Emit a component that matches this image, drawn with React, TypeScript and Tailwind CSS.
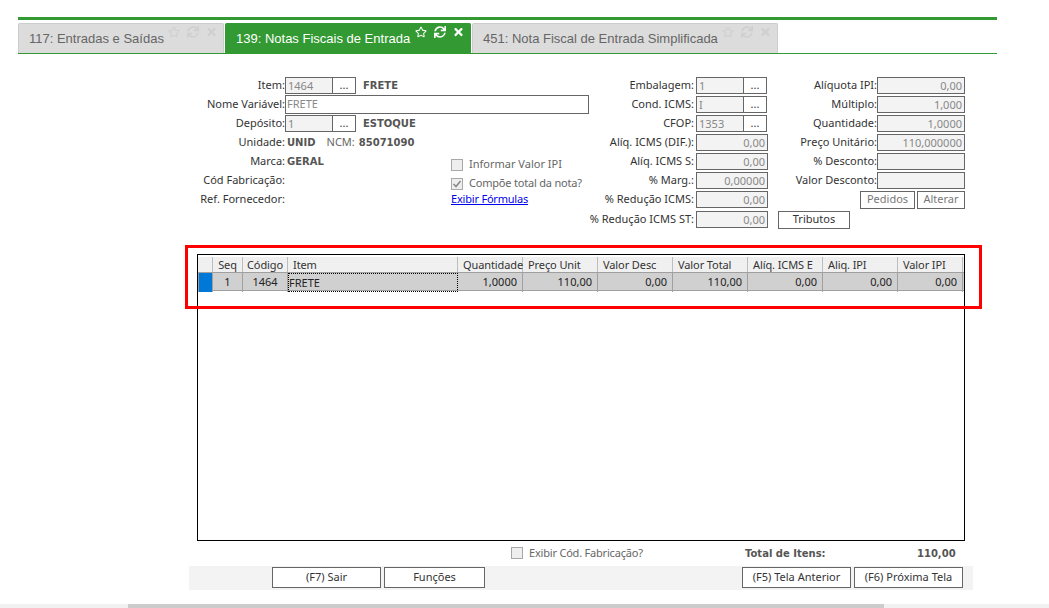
import React from "react";
import { FaRegStar, FaSync, FaTimes } from "react-icons/fa";

const font = { fontFamily: '"Noto Sans", "DejaVu Sans", sans-serif' };

function Tab({ label, active, w }: { label: string; active?: boolean; w: string }) {
  return (
    <div
      className={`${w} h-[30px] flex items-start justify-between pl-[10px] rounded-t-[2px] border border-b-0 ${
        active ? "bg-[#339933] border-[#339933] text-white" : "bg-[#dcdcdc] border-[#cccccc] text-[#666666]"
      }`}
    >
      <span className="text-[13px] leading-[29px] whitespace-nowrap" style={{ fontFamily: '"Liberation Sans", sans-serif' }}>
        {label}
      </span>
      <span className={`flex items-center gap-[7px] pt-[2px] pr-[6px] ${active ? "text-white" : "text-[#cfcfcf]"}`}>
        <FaRegStar className="w-[12px] h-[12px]" />
        <FaSync className="w-[12px] h-[12px]" />
        <FaTimes className="w-[11px] h-[12px]" />
      </span>
    </div>
  );
}

function Row({ label, lw, children, className }: { label?: string; lw: string; children?: React.ReactNode; className?: string }) {
  return (
    <div className={`h-[19px] flex items-center ${className ?? ""}`}>
      <span className={`${lw} shrink-0 text-right text-[#333333] whitespace-nowrap`}>{label}</span>
      {children}
    </div>
  );
}

function Strong({ children, className }: { children?: React.ReactNode; className?: string }) {
  return (
    <b className={`text-[10px] text-[#555555] ${className ?? ""}`} style={{ fontFamily: '"DejaVu Sans", sans-serif' }}>
      {children}
    </b>
  );
}

function Lookup({ value }: { value: string }) {
  return (
    <div className="flex h-[17px] w-[71px] border border-[#666666]">
      <span className="w-[47px] bg-[#f3f3f3] border-r border-[#666666] pl-[2px] text-[#888888] leading-[16px]">{value}</span>
      <span className="flex-1 text-center leading-[14px] text-[#333333]">...</span>
    </div>
  );
}

function Num({ value, w }: { value?: string; w: string }) {
  return (
    <div className={`${w} h-[17px] border border-[#666666] bg-[#f3f3f3] pr-[2px] text-right text-[#888888] leading-[16px]`}>{value}</div>
  );
}

function Btn({ children, w, muted }: { children: React.ReactNode; w: string; muted?: boolean }) {
  return (
    <div className={`${w} h-[18px] border border-[#666666] bg-white flex items-center justify-center ${muted ? "text-[#777777]" : "text-[#333333]"}`}>
      {children}
    </div>
  );
}

function Check({ checked }: { checked?: boolean }) {
  return (
    <span className="w-[12px] h-[12px] border border-[#a8a8a8] bg-[#eeeeee] flex items-center justify-center shrink-0">
      {checked && (
        <svg viewBox="0 0 10 10" className="w-[10px] h-[10px]">
          <path d="M1.5 5 L4 7.5 L8.5 2" fill="none" stroke="#8a8a8a" strokeWidth="1.6" />
        </svg>
      )}
    </span>
  );
}

const cols = "grid grid-cols-[15px_30px_45px_170px_65px_75px_75px_75px_75px_75px_65px]";
const headers = ["", "Seq", "Código", "Item", "Quantidade", "Preço Unit", "Valor Desc", "Valor Total", "Alíq. ICMS E", "Aliq. IPI", "Valor IPI"];
const cells = ["", "1", "1464", "FRETE", "1,0000", "110,00", "0,00", "110,00", "0,00", "0,00", "0,00"];

export default function App() {
  return (
    <div className="relative w-[1049px] h-[608px] overflow-hidden bg-white text-[11px]" style={font}>
      <div className="ml-[18px] mt-[17px] w-[979px] h-[3px] bg-[#339933]" />
      <div className="ml-[18px] mt-[3px] w-[979px] h-[31px] flex gap-[1px] border-b border-[#339933]">
        <Tab label="117: Entradas e Saídas" w="w-[206px]" />
        <Tab label="139: Notas Fiscais de Entrada" active w="w-[246px]" />
        <Tab label="451: Nota Fiscal de Entrada Simplificada" w="w-[306px]" />
      </div>

      <div className="ml-[190px] mt-[22px] flex items-start h-[156px]">
        <div className="w-[399px]">
          <Row label="Item:" lw="w-[95px]">
            <Lookup value="1464" />
            <Strong className="ml-[7px]">FRETE</Strong>
          </Row>
          <Row label="Nome Variável:" lw="w-[95px]">
            <div className="w-[304px] h-[19px] border border-[#666666] pl-[1px] text-[#888888] leading-[15px]">FRETE</div>
          </Row>
          <Row label="Depósito:" lw="w-[95px]">
            <Lookup value="1" />
            <Strong className="ml-[7px]">ESTOQUE</Strong>
          </Row>
          <Row label="Unidade:" lw="w-[95px]">
            <Strong className="ml-[2px]">UNID</Strong>
            <span className="ml-[11px] text-[#666666]">NCM:</span>
            <Strong className="ml-[4px]">85071090</Strong>
          </Row>
          <Row label="Marca:" lw="w-[95px]">
            <Strong className="ml-[2px] w-[164px]">GERAL</Strong>
            <span className="flex items-center mt-[6px]">
              <Check />
              <span className="ml-[6px] text-[#666666]">Informar Valor IPI</span>
            </span>
          </Row>
          <Row label="Cód Fabricação:" lw="w-[95px]">
            <span className="ml-[2px] w-[164px]" />
            <span className="flex items-center mt-[6px]">
              <Check checked />
              <span className="ml-[6px] text-[#666666] tracking-[-0.2px]">Compõe total da nota?</span>
            </span>
          </Row>
          <Row label="Ref. Fornecedor:" lw="w-[95px]">
            <span className="ml-[2px] w-[164px]" />
            <a className="text-[#0000ee] underline tracking-[-0.2px]">Exibir Fórmulas</a>
          </Row>
        </div>

        <div className="w-[179px]">
          <Row label="Embalagem:" lw="w-[105px] mr-[2px]"><Lookup value="1" /></Row>
          <Row label="Cond. ICMS:" lw="w-[105px] mr-[2px]"><Lookup value="I" /></Row>
          <Row label="CFOP:" lw="w-[105px] mr-[2px]"><Lookup value="1353" /></Row>
          <Row label="Alíq. ICMS (DIF.):" lw="w-[105px] mr-[2px]"><Num value="0,00" w="w-[72px]" /></Row>
          <Row label="Alíq. ICMS S:" lw="w-[105px] mr-[2px]"><Num value="0,00" w="w-[72px]" /></Row>
          <Row label="% Marg.:" lw="w-[105px] mr-[2px]"><Num value="0,00000" w="w-[72px]" /></Row>
          <Row label="% Redução ICMS:" lw="w-[105px] mr-[2px]"><Num value="0,00" w="w-[72px]" /></Row>
          <Row label="% Redução ICMS ST:" lw="w-[105px] mr-[2px]" className="mt-[1px]"><Num value="0,00" w="w-[72px]" /></Row>
        </div>

        <div className="ml-[10px] w-[187px]">
          <Row label="Alíquota IPI:" lw="w-[99px]"><Num value="0,00" w="w-[88px]" /></Row>
          <Row label="Múltiplo:" lw="w-[99px]"><Num value="1,000" w="w-[88px]" /></Row>
          <Row label="Quantidade:" lw="w-[99px]"><Num value="1,0000" w="w-[88px]" /></Row>
          <Row label="Preço Unitário:" lw="w-[99px]"><Num value="110,000000" w="w-[88px]" /></Row>
          <Row label="% Desconto:" lw="w-[99px]"><Num w="w-[88px]" /></Row>
          <Row label="Valor Desconto:" lw="w-[99px]"><Num w="w-[88px]" /></Row>
          <div className="h-[19px] flex items-center justify-end gap-[2px]">
            <Btn w="w-[55px]" muted>Pedidos</Btn>
            <Btn w="w-[48px]" muted>Alterar</Btn>
          </div>
          <div className="h-[19px] mt-[1px] flex items-center">
            <Btn w="w-[72px]">Tributos</Btn>
          </div>
        </div>
      </div>

      <div className="ml-[197px] mt-[22px] w-[768px] h-[287px] border border-black pt-[2px]">
        <div className={`${cols} h-[16px] bg-[#f0f0f0] border-b border-[#a0a0a0]`}>
          {headers.map((h, i) => (
            <div key={i} className={`border-r border-[#bdbdbd] leading-[15px] text-[#333333] whitespace-nowrap tracking-[-0.1px] ${i === 1 || i === 2 ? "text-center" : "pl-[5px]"}`}>
              {h}
            </div>
          ))}
        </div>
        <div className={`${cols} h-[18px] bg-[#d0d0d0] border-b border-[#a0a0a0]`}>
          {cells.map((c, i) => (
            <div
              key={i}
              className={`leading-[17px] text-[#222222] ${
                i === 0
                  ? "bg-[#0078d7] border-l border-r border-[#a0a0a0]"
                  : i === 3
                  ? "border border-dotted border-black leading-[14px]"
                  : i < 3
                  ? "text-center border-r border-[#a0a0a0]"
                  : "text-right pr-[5px] border-r border-[#a0a0a0]"
              }`}
            >
              {c}
            </div>
          ))}
        </div>
      </div>

      <div className="h-[24px] flex items-center">
        <div className="ml-[511px] flex items-center w-[234px]">
          <Check />
          <span className="ml-[6px] text-[#666666] tracking-[-0.2px]">Exibir Cód. Fabricação?</span>
        </div>
        <Strong className="w-[172px]">Total de Itens:</Strong>
        <Strong className="w-[38px] text-right">110,00</Strong>
      </div>

      <div className="ml-[189px] mt-[1px] w-[784px] h-[24px] bg-[#f3f3f3] flex items-start pt-[1px] pl-[83px] gap-[3px]">
        <Btn w="w-[109px] !h-[21px]">(F7) Sair</Btn>
        <Btn w="w-[101px] !h-[21px]">Funções</Btn>
        <span className="w-[251px]" />
        <Btn w="w-[109px] !h-[21px]">(F5) Tela Anterior</Btn>
        <Btn w="w-[109px] !h-[21px]">(F6) Próxima Tela</Btn>
      </div>

      <div className="mt-[14px] h-[4px] bg-[#f1f1f1]">
        <div className="ml-[128px] w-[756px] h-full bg-[#cccccc]" />
      </div>

      <div className="absolute left-[185px] top-[245px] w-[797px] h-[64px] border-[3px] border-[#ff0000] pointer-events-none" />
    </div>
  );
}
